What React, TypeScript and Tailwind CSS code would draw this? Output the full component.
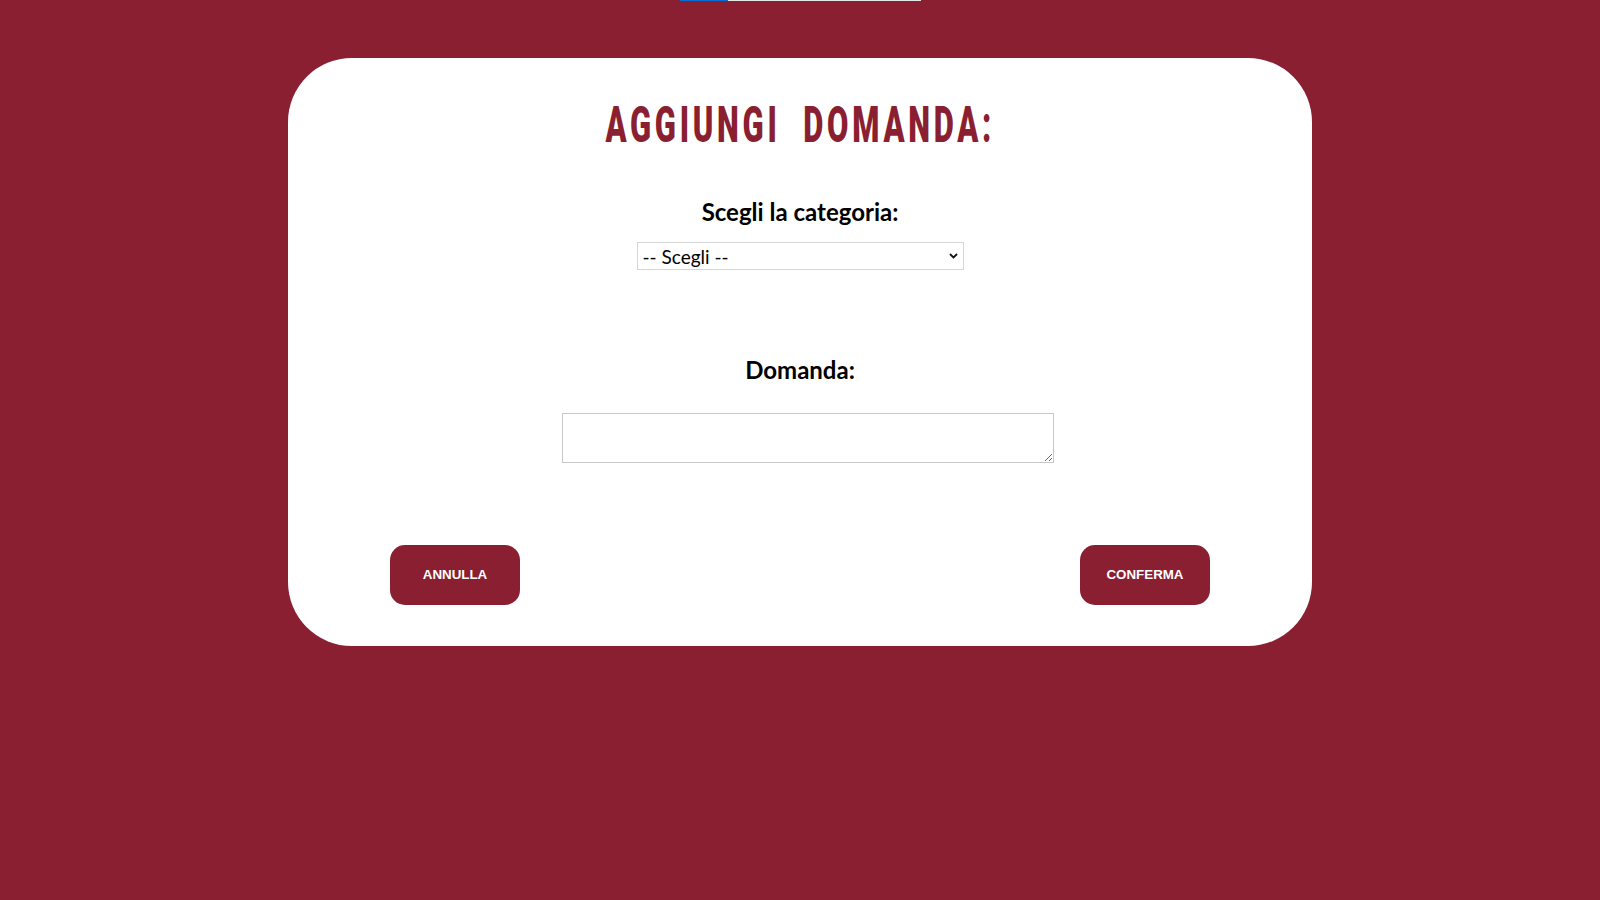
import React from "react";

export default function App() {
  return (
    <div className="min-h-[900px] w-full bg-[#8a1f31] font-['Lato',sans-serif]">
      <div className="flex h-px">
        <div className="ml-[680px] h-px w-[48px] bg-[#0a6ad6]" />
        <div className="h-px w-[193px] bg-[#e6e6e6]" />
      </div>
      <div className="mx-auto mt-[57px] flex w-[1024px] flex-col items-center rounded-[64px] bg-white pt-[38px] pb-[41px]">
        <h1 className="flex h-[58px] w-full items-center justify-center">
          <span className="inline-block scale-x-[0.62] font-['Roboto',sans-serif] text-[50px] font-black leading-[58px] tracking-[6px] text-[#8a1f31] whitespace-pre">
            AGGIUNGI  DOMANDA:
          </span>
        </h1>
        <label className="mt-[43px] text-[24px] font-bold leading-[29px] text-black">
          Scegli la categoria:
        </label>
        <div className="relative mt-[16px] h-[28px] w-[327px]">
          <select className="h-full w-full appearance-none border border-[#d6d6d6] bg-white pl-[5px] text-[19px] leading-[25px] text-black font-['Lato',sans-serif]">
            <option>-- Scegli --</option>
          </select>
          <svg
            className="pointer-events-none absolute right-[6px] top-[11px]"
            width="9"
            height="6"
            viewBox="0 0 9 6"
          >
            <path d="M1 1 L4.5 4.5 L8 1" fill="none" stroke="#111" strokeWidth="1.8" />
          </svg>
        </div>
        <label className="mt-[85px] text-[24px] font-bold leading-[29px] text-black">
          Domanda:
        </label>
        <textarea className="mt-[29px] ml-[16px] h-[50px] w-[492px] border border-[#c8c8c8] bg-white font-['Lato',sans-serif]" />
        <div className="mt-[82px] flex w-full justify-between px-[102px]">
          <button className="h-[60px] w-[130px] rounded-[15px] bg-[#8a1f31] font-['Liberation_Sans',Arial,sans-serif] text-[13.333px] font-bold text-white">
            ANNULLA
          </button>
          <button className="h-[60px] w-[130px] rounded-[15px] bg-[#8a1f31] font-['Liberation_Sans',Arial,sans-serif] text-[13.333px] font-bold text-white">
            CONFERMA
          </button>
        </div>
      </div>
    </div>
  );
}
